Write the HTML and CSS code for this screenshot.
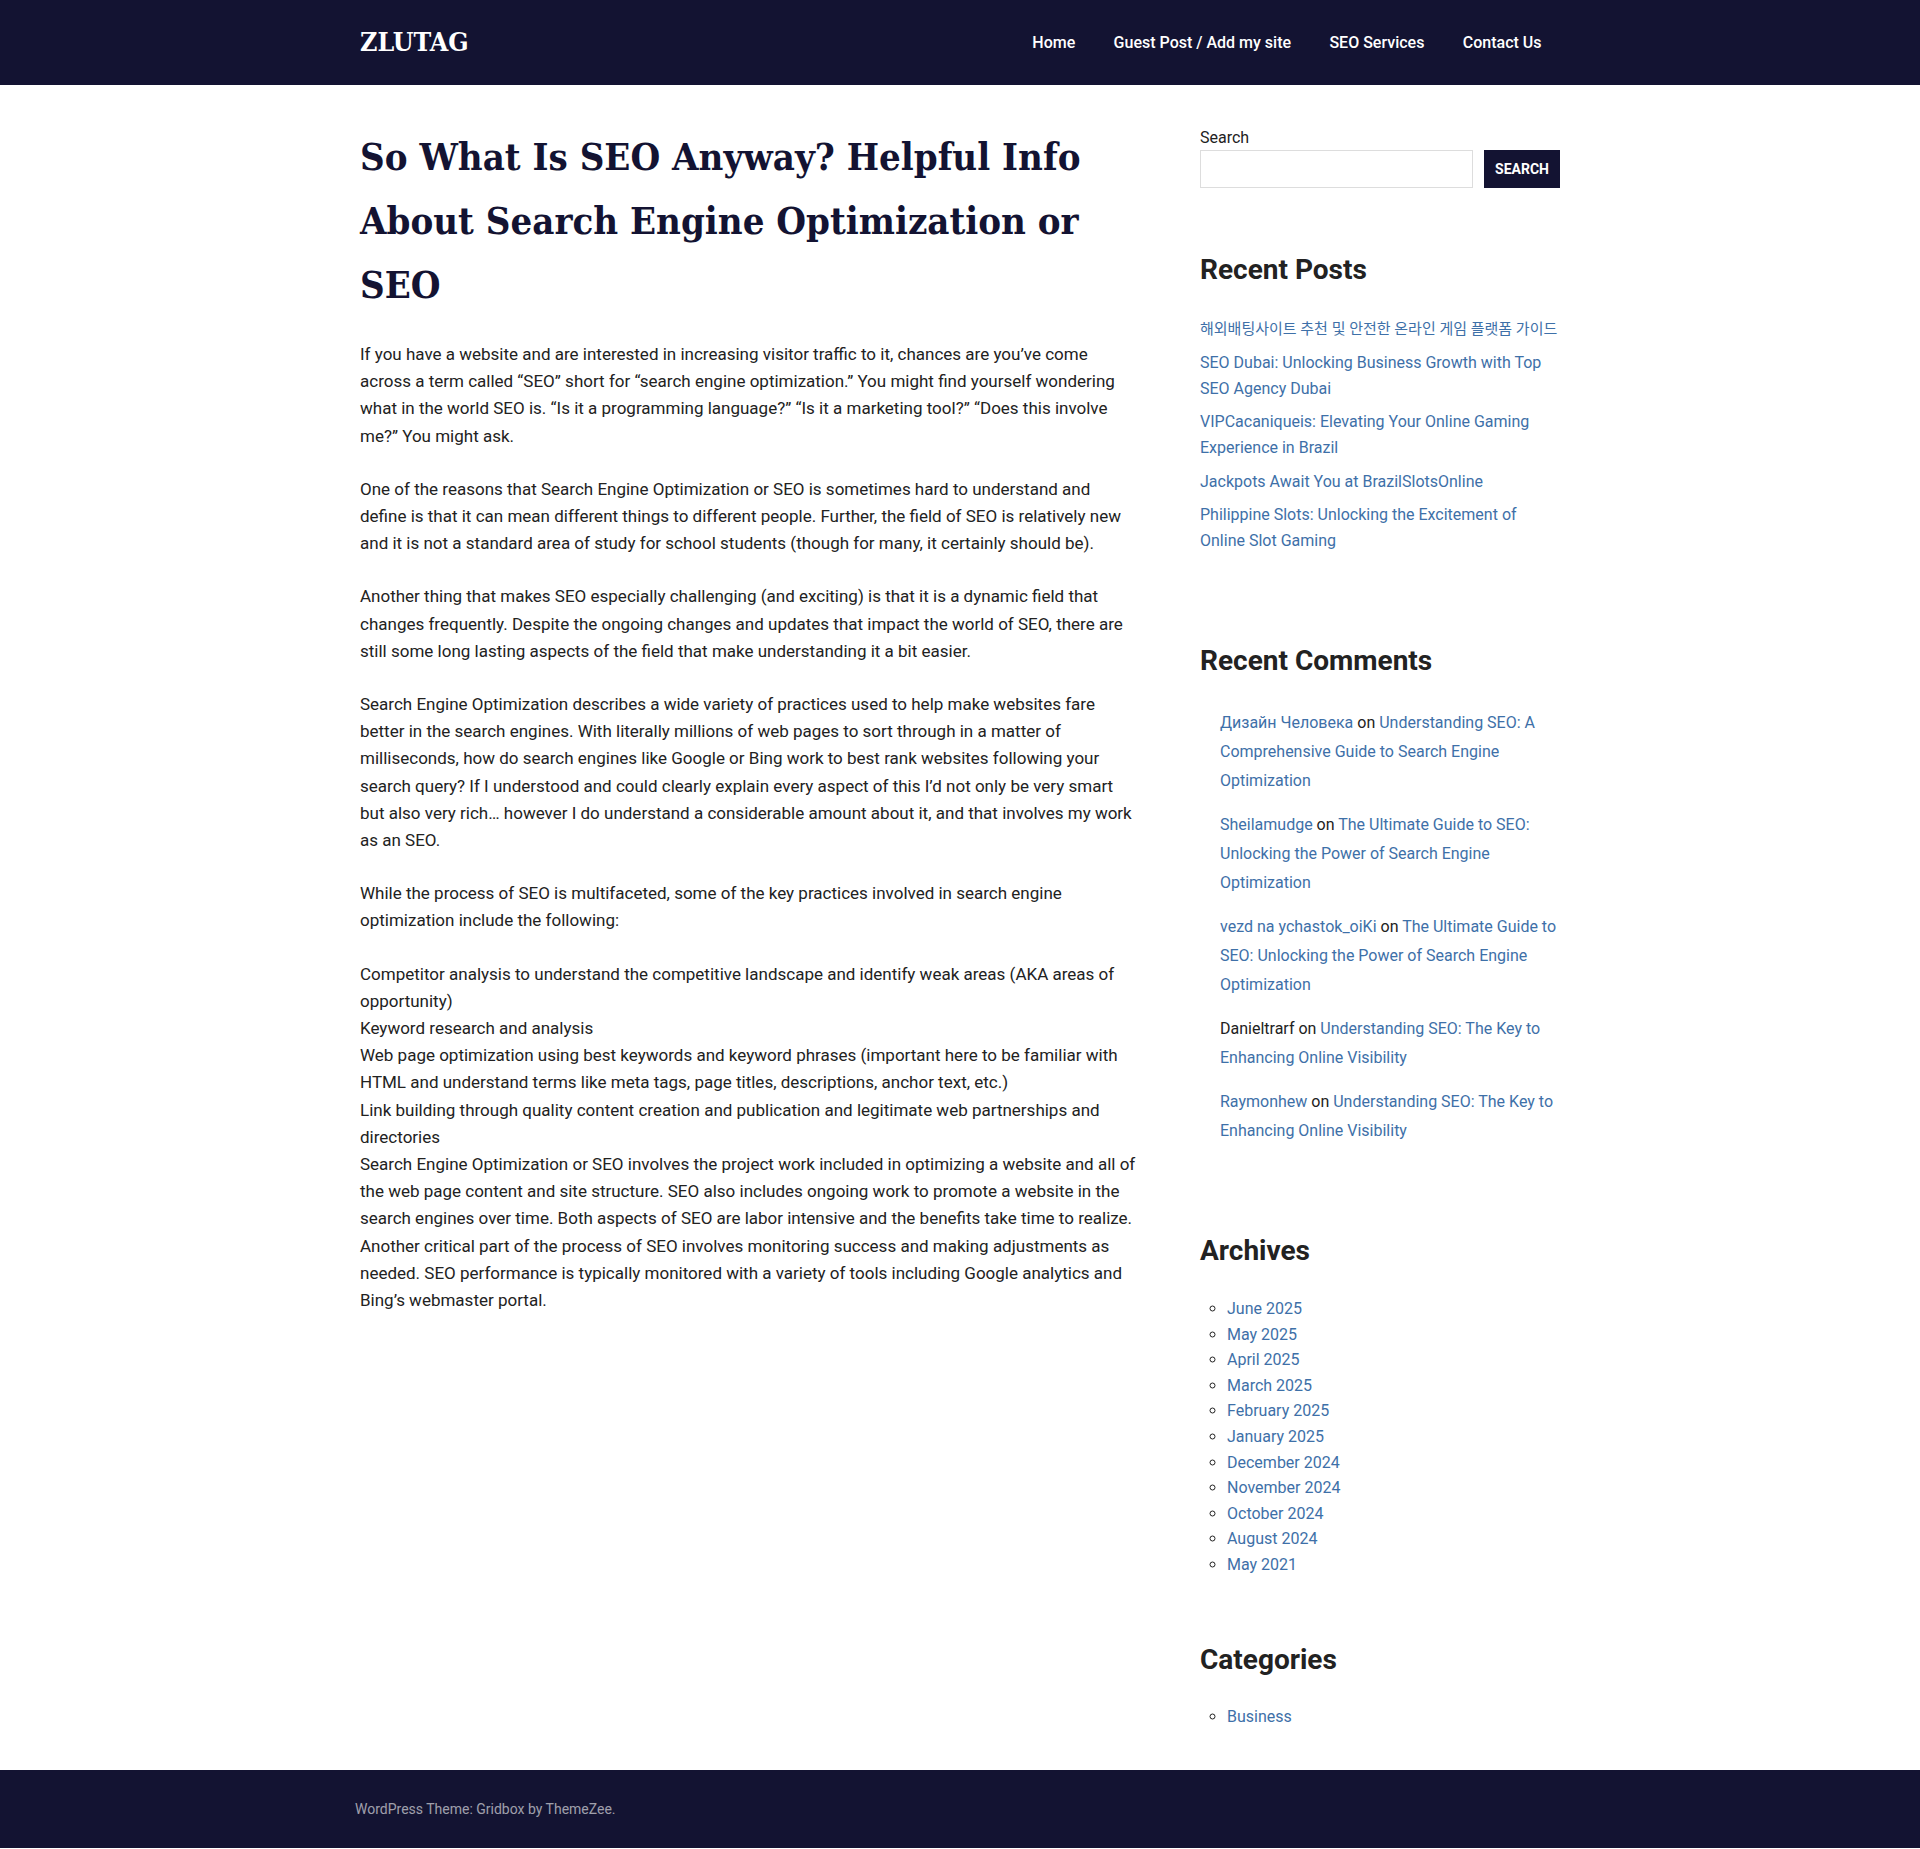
FILE: index.html
```html
<!DOCTYPE html>
<html lang="en">
<head>
<meta charset="utf-8">
<title>So What Is SEO Anyway? - ZLUTAG</title>
<link rel="stylesheet" href="styles.css">
</head>
<body>
<header class="site-header">
  <div class="container header-inner">
    <a class="logo" href="#">ZLUTAG</a>
    <nav class="main-nav">
      <ul>
        <li><a href="#">Home</a></li>
        <li><a href="#">Guest Post / Add my site</a></li>
        <li><a href="#">SEO Services</a></li>
        <li><a href="#">Contact Us</a></li>
      </ul>
    </nav>
  </div>
</header>

<div class="container site-main">
  <article class="content">
    <h1 class="entry-title">So What Is SEO Anyway? Helpful Info About Search Engine Optimization or SEO</h1>
    <div class="entry-content">
      <p>If you have a website and are interested in increasing visitor traffic to it, chances are you’ve come across a term called “SEO” short for “search engine optimization.” You might find yourself wondering what in the world SEO is. “Is it a programming language?” “Is it a marketing tool?” “Does this involve me?” You might ask.</p>
      <p>One of the reasons that Search Engine Optimization or SEO is sometimes hard to understand and define is that it can mean different things to different people. Further, the field of SEO is relatively new and it is not a standard area of study for school students (though for many, it certainly should be).</p>
      <p>Another thing that makes SEO especially challenging (and exciting) is that it is a dynamic field that changes frequently. Despite the ongoing changes and updates that impact the world of SEO, there are still some long lasting aspects of the field that make understanding it a bit easier.</p>
      <p>Search Engine Optimization describes a wide variety of practices used to help make websites fare better in the search engines. With literally millions of web pages to sort through in a matter of milliseconds, how do search engines like Google or Bing work to best rank websites following your search query? If I understood and could clearly explain every aspect of this I’d not only be very smart but also very rich… however I do understand a considerable amount about it, and that involves my work as an SEO.</p>
      <p>While the process of SEO is multifaceted, some of the key practices involved in search engine optimization include the following:</p>
      <p>Competitor analysis to understand the competitive landscape and identify weak areas (AKA areas of opportunity)<br>Keyword research and analysis<br>Web page optimization using best keywords and keyword phrases (important here to be familiar with HTML and understand terms like meta tags, page titles, descriptions, anchor text, etc.)<br>Link building through quality content creation and publication and legitimate web partnerships and directories<br>Search Engine Optimization or SEO involves the project work included in optimizing a website and all of the web page content and site structure. SEO also includes ongoing work to promote a website in the search engines over time. Both aspects of SEO are labor intensive and the benefits take time to realize. Another critical part of the process of SEO involves monitoring success and making adjustments as needed. SEO performance is typically monitored with a variety of tools including Google analytics and Bing’s webmaster portal.</p>
    </div>
  </article>

  <aside class="sidebar">
    <section class="widget widget-search">
      <label class="search-label" for="s">Search</label>
      <div class="search-row">
        <input id="s" class="search-input" type="search">
        <button class="search-button" type="button">Search</button>
      </div>
    </section>

    <section class="widget widget-posts">
      <h2 class="widget-title">Recent Posts</h2>
      <ul class="post-list">
        <li class="post-ko"><a href="#">해외배팅사이트 추천 및 안전한 온라인 게임 플랫폼 가이드</a></li>
        <li><a href="#">SEO Dubai: Unlocking Business Growth with Top SEO Agency Dubai</a></li>
        <li><a href="#">VIPCacaniqueis: Elevating Your Online Gaming Experience in Brazil</a></li>
        <li><a href="#">Jackpots Await You at BrazilSlotsOnline</a></li>
        <li><a href="#">Philippine Slots: Unlocking the Excitement of Online Slot Gaming</a></li>
      </ul>
    </section>

    <section class="widget widget-comments">
      <h2 class="widget-title">Recent Comments</h2>
      <ul class="comment-list">
        <li><a href="#">Дизайн Человека</a> on <a href="#">Understanding SEO: A Comprehensive Guide to Search Engine Optimization</a></li>
        <li><a href="#">Sheilamudge</a> on <a href="#">The Ultimate Guide to SEO: Unlocking the Power of Search Engine Optimization</a></li>
        <li><a href="#">vezd na ychastok_oiKi</a> on <a href="#">The Ultimate Guide to SEO: Unlocking the Power of Search Engine Optimization</a></li>
        <li>Danieltrarf on <a href="#">Understanding SEO: The Key to Enhancing Online Visibility</a></li>
        <li><a href="#">Raymonhew</a> on <a href="#">Understanding SEO: The Key to Enhancing Online Visibility</a></li>
      </ul>
    </section>

    <section class="widget widget-archives">
      <h2 class="widget-title">Archives</h2>
      <ul class="circle-list">
        <li><a href="#">June 2025</a></li>
        <li><a href="#">May 2025</a></li>
        <li><a href="#">April 2025</a></li>
        <li><a href="#">March 2025</a></li>
        <li><a href="#">February 2025</a></li>
        <li><a href="#">January 2025</a></li>
        <li><a href="#">December 2024</a></li>
        <li><a href="#">November 2024</a></li>
        <li><a href="#">October 2024</a></li>
        <li><a href="#">August 2024</a></li>
        <li><a href="#">May 2021</a></li>
      </ul>
    </section>

    <section class="widget widget-categories">
      <h2 class="widget-title">Categories</h2>
      <ul class="circle-list">
        <li><a href="#">Business</a></li>
      </ul>
    </section>
  </aside>
</div>

<footer class="site-footer">
  <div class="footer-inner">WordPress Theme: Gridbox by ThemeZee.</div>
</footer>
</body>
</html>
```

FILE: styles.css
```css
* { box-sizing: border-box; }

body {
  margin: 0;
  background: #fff;
  color: #222;
  font-family: Roboto, "Noto Sans", "Noto Sans CJK KR", sans-serif;
  font-size: 17px;
  line-height: 1.6;
}

a { color: #3e70a8; text-decoration: none; }

.container {
  width: 1200px;
  margin: 0 auto;
}

/* Header */
.site-header {
  background: #131332;
  height: 85px;
}

.header-inner {
  height: 100%;
  display: flex;
  align-items: center;
  justify-content: space-between;
}

.logo {
  color: #fff;
  font-family: "DejaVu Serif Condensed", "DejaVu Serif", serif;
  font-stretch: condensed;
  font-weight: bold;
  font-size: 26.5px;
  line-height: 1;
}

.main-nav ul {
  list-style: none;
  margin: 0;
  padding: 0;
  display: flex;
}

.main-nav a {
  display: block;
  color: #fff;
  font-size: 16px;
  font-weight: 500;
  padding: 0 19.2px;
  line-height: 1.5;
}

.main-nav li:first-child a { padding-left: 22px; }
.main-nav li:last-child a { padding-right: 18.5px; }

/* Main */
.site-main {
  display: flex;
  gap: 60px;
  padding: 40px 0 41px;
}

.content {
  width: 780px;
  flex: none;
}

.entry-title {
  margin: 0 0 24px;
  color: #131332;
  font-family: "DejaVu Serif Condensed", "DejaVu Serif", serif;
  font-stretch: condensed;
  font-weight: bold;
  font-size: 38px;
  line-height: 64px;
}

.entry-content p {
  margin: 0 0 26px;
  line-height: 27.2px;
}

/* Sidebar */
.sidebar {
  width: 360px;
  flex: none;
  font-size: 16px;
}

.search-label {
  display: block;
  font-size: 16px;
  line-height: 24px;
  margin-top: 1px;
}

.search-row {
  display: flex;
  gap: 11px;
  height: 38px;
}

.search-input {
  flex: 1;
  height: 38px;
  border: 1px solid #ddd;
  padding: 0 8px;
  font: inherit;
}

.search-button {
  width: 76px;
  height: 38px;
  border: none;
  background: #131332;
  color: #fff;
  font-family: Roboto, sans-serif;
  font-weight: bold;
  font-size: 14px;
  text-transform: uppercase;
  padding: 0;
}

.widget-title {
  margin: 0;
  color: #222;
  font-size: 28px;
  font-weight: bold;
  line-height: 36px;
}

.widget-posts { margin-top: 64px; }
.widget-comments { margin-top: 89px; }
.widget-archives { margin-top: 88px; }
.widget-categories { margin-top: 64px; }

.post-list {
  list-style: none;
  margin: 28px 0 0;
  padding: 0;
}

.post-list li {
  line-height: 26px;
  margin-bottom: 7.5px;
}

.post-list li.post-ko {
  font-size: 15px;
  white-space: nowrap;
}

.post-list li:last-child { margin-bottom: 0; }

.comment-list {
  list-style: none;
  margin: 29px 0 0;
  padding: 0 0 0 20px;
  font-size: 16px;
}

.comment-list li {
  line-height: 29px;
  margin-bottom: 15px;
}

.comment-list li:last-child { margin-bottom: 0; }

.circle-list {
  list-style: circle;
  margin: 27px 0 0;
  padding-left: 27px;
}

.circle-list li {
  line-height: 25.6px;
}

.widget-categories .circle-list { margin-top: 26px; }

/* Footer */
.site-footer {
  background: #131332;
  height: 78px;
  display: flex;
  align-items: center;
}

.footer-inner {
  width: 1210px;
  margin: 0 auto;
  color: rgba(255, 255, 255, 0.6);
  font-size: 14px;
  line-height: 20px;
}
```
